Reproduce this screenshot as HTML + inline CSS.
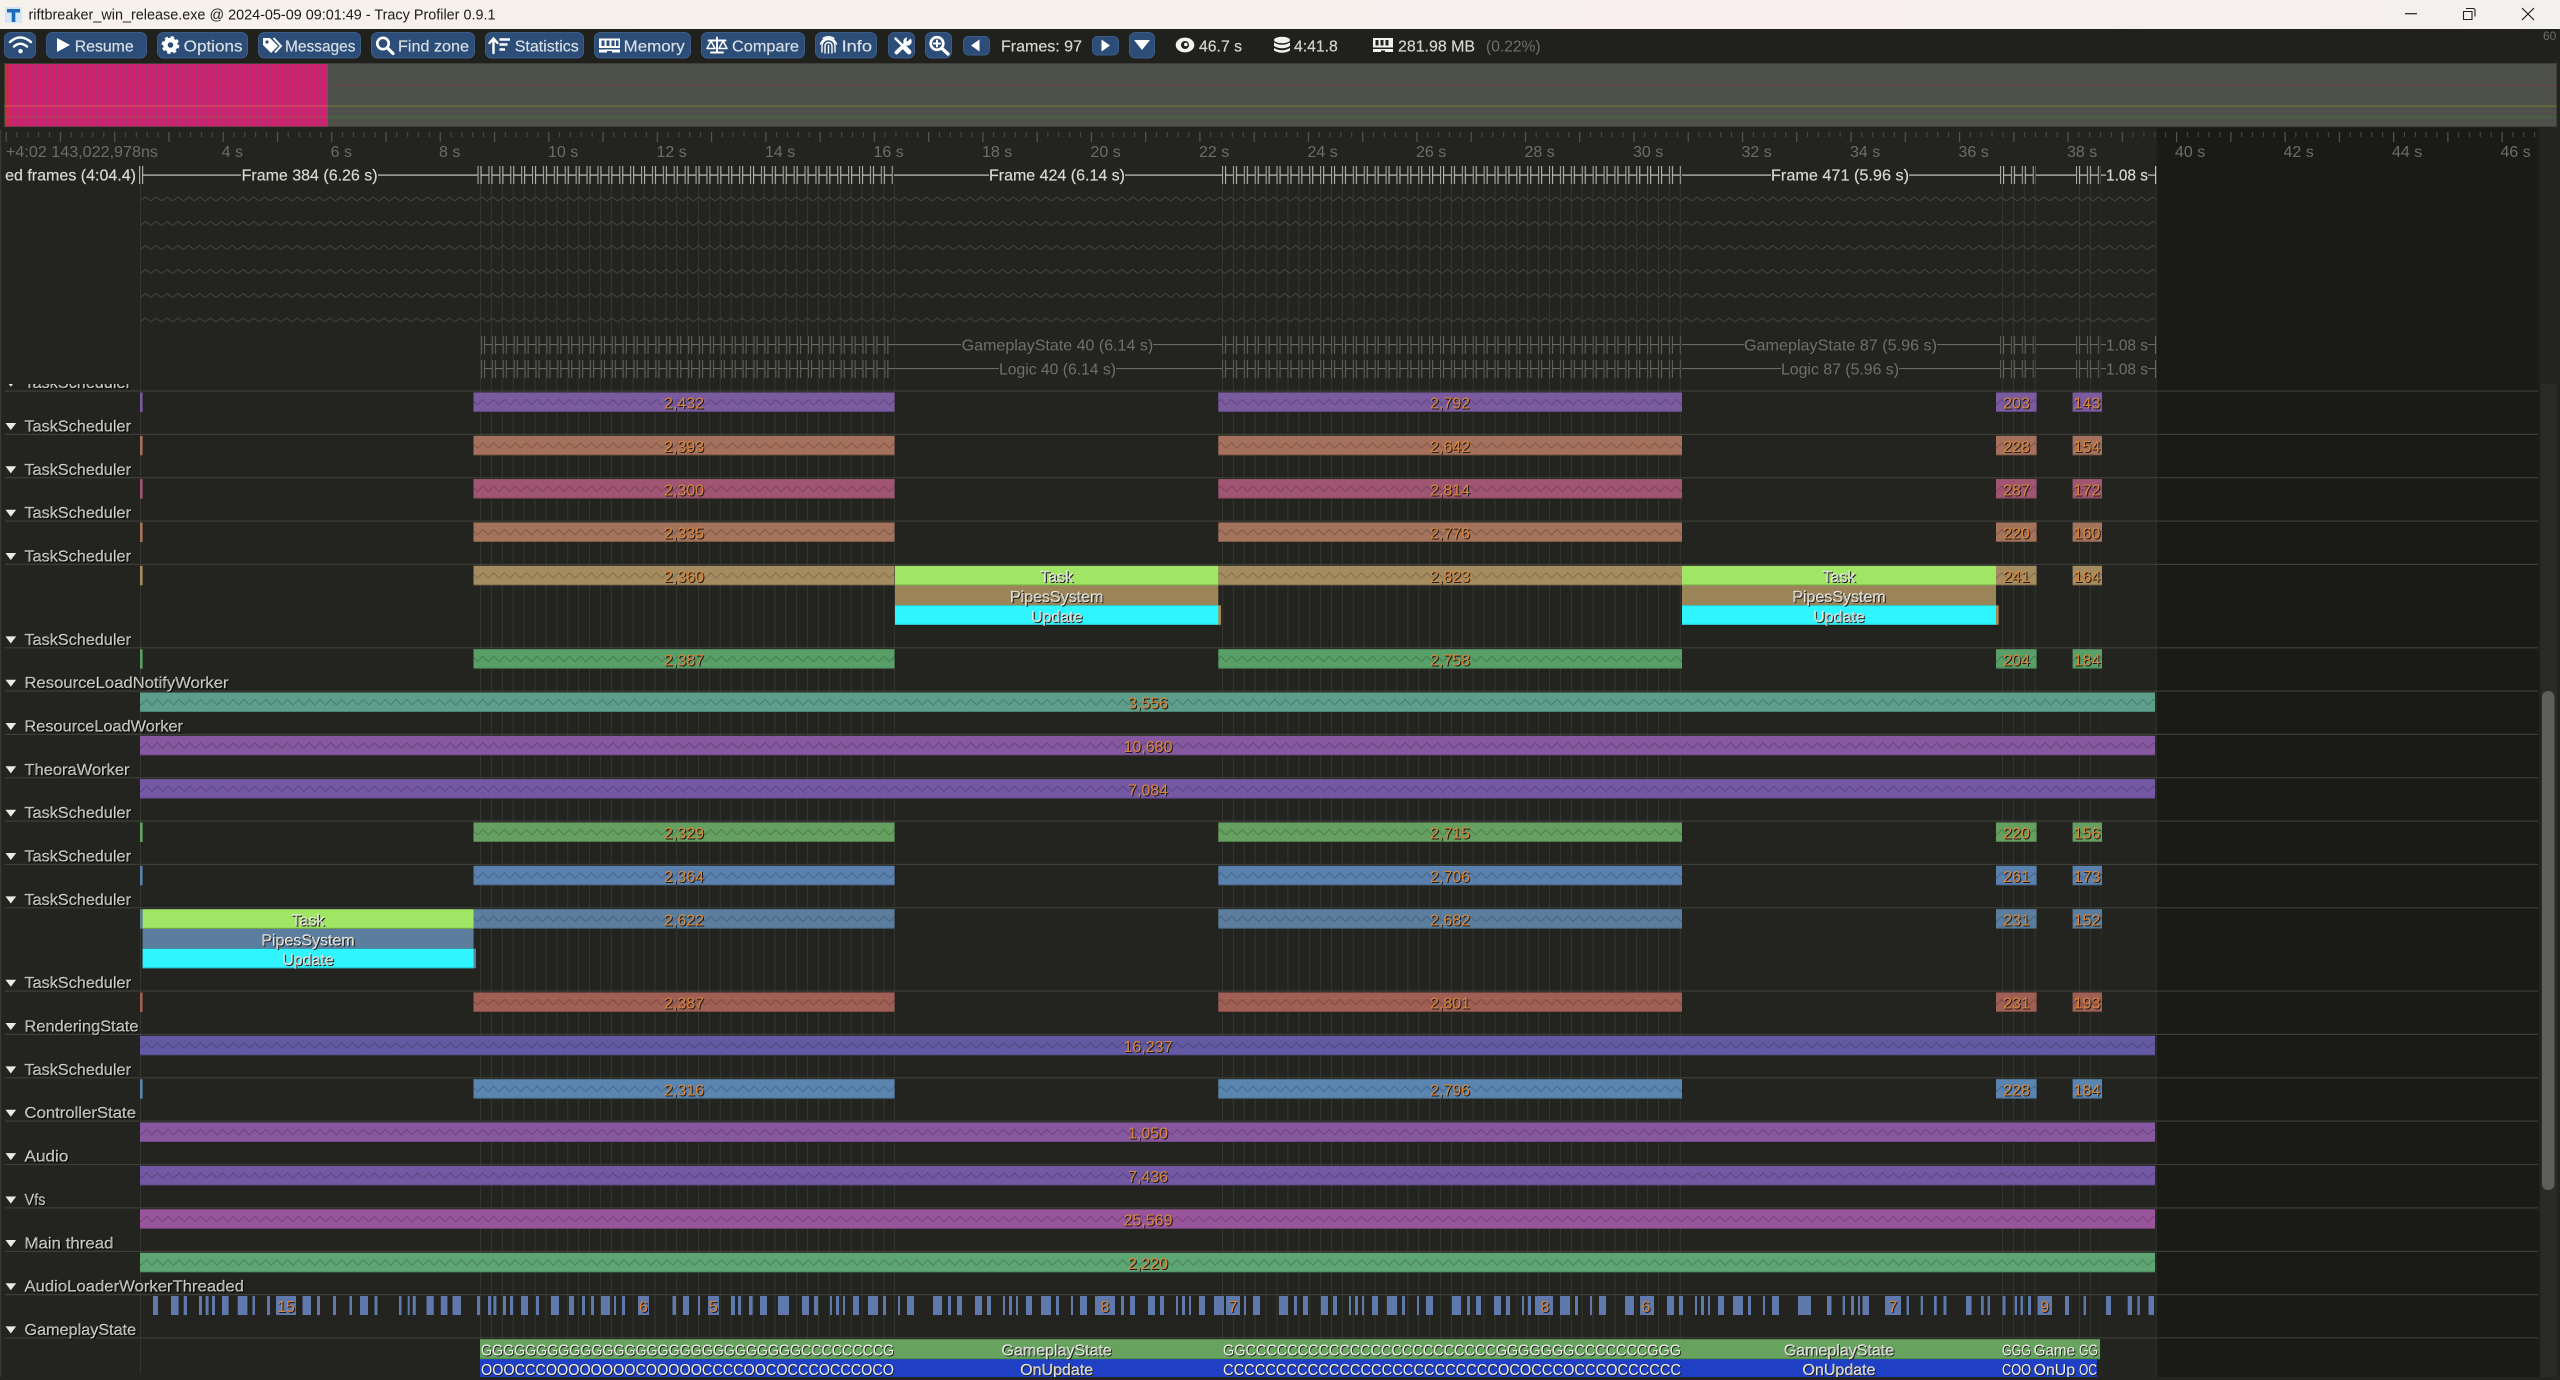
<!DOCTYPE html>
<html lang="en">
<head>
<meta charset="utf-8">
<title>Tracy Profiler</title>
<style>
html,body{margin:0;padding:0;background:#23241f;width:2560px;height:1380px;overflow:hidden}
svg{display:block;position:absolute;left:0;top:0}
text{font-family:"Liberation Sans",sans-serif;font-size:16px;white-space:pre}
.b{fill:#d8dfe4;stroke:#d8dfe4;stroke-width:.2px}
.w{fill:#d6d6ce;stroke:#d6d6ce;stroke-width:.2px}
.r{fill:#6c6d68}
.f{fill:#d8d8d0;stroke:#d8d8d0;stroke-width:.2px}
.g{fill:#6f706a}
.l{fill:#dcdcd4;stroke:#dcdcd4;stroke-width:.2px;text-shadow:1px 1px 0 #000}
.n{fill:#d9863a;text-anchor:middle;text-shadow:1px 1px 0 #1a1a1a}
.z{fill:#f2f2ec;stroke:#f2f2ec;stroke-width:.2px;text-anchor:middle;text-shadow:1px 1px 0 #222}
.c{fill:#f0f0ea;text-shadow:1px 1px 0 #222}
</style>
</head>
<body>
<svg width="2560" height="1380" viewBox="0 0 2560 1380" xmlns="http://www.w3.org/2000/svg">
<defs>
<linearGradient id="tb" x1="0" x2="1" y1="0" y2="0"><stop offset="0" stop-color="#f6f1ea"/><stop offset=".8" stop-color="#f8efef"/><stop offset="1" stop-color="#f3f1ee"/></linearGradient>
<pattern id="mg" patternUnits="userSpaceOnUse" width="3.34" height="10"><rect width="3.34" height="10" fill="#d4206a"/><rect x="2.5" width=".84" height="10" fill="#9c3a80"/></pattern>
<pattern id="tk" patternUnits="userSpaceOnUse" width="54.26" height="10"><rect width="1.2" height="10" fill="#555650"/><rect x="10.85" width="1" height="5" fill="#4c4d48"/><rect x="21.7" width="1" height="5" fill="#4c4d48"/><rect x="32.55" width="1" height="5" fill="#4c4d48"/><rect x="43.4" width="1" height="5" fill="#4c4d48"/></pattern>
<pattern id="wt" patternUnits="userSpaceOnUse" width="10.85" height="6"><path d="M0 5 L5.42 1 L10.85 5" fill="none" stroke="#43443e" stroke-width="1"/></pattern>
<pattern id="wb" patternUnits="userSpaceOnUse" width="10.85" height="21"><path d="M0 14 L5.42 8.5 L10.85 14" fill="none" stroke="#000" stroke-opacity=".2" stroke-width="1"/></pattern>
<pattern id="hw" patternUnits="userSpaceOnUse" width="10.9" height="18"><rect width="1.1" height="18" fill="#a8a8a0"/><rect x="3" width="1.1" height="18" fill="#b8b8b0"/><rect x="3" y="8.5" width="7.9" height="1.2" fill="#c8c8c0"/></pattern>
<pattern id="hg" patternUnits="userSpaceOnUse" width="10.9" height="18"><rect width="1.1" height="18" fill="#5a5b54"/><rect x="3" width="1.1" height="18" fill="#5f6059"/><rect x="3" y="8" width="7.9" height="1.1" fill="#6a6b64"/></pattern>
<pattern id="v" patternUnits="userSpaceOnUse" width="10.9" height="10"><rect width="1" height="10" fill="#34352f"/></pattern>
<pattern id="au" patternUnits="userSpaceOnUse" width="173" height="19.5"><path d="M0 0h5v19.5h-5zM18 0h7v19.5h-7zM30 0h4v19.5h-4zM46 0h2v19.5h-2zM52 0h3v19.5h-3zM59 0h2v19.5h-2zM69 0h6v19.5h-6zM84 0h10v19.5h-10zM99 0h3v19.5h-3zM114 0h2v19.5h-2zM123 0h7v19.5h-7zM149 0h9v19.5h-9zM164 0h3v19.5h-3z" fill="#5f79ad"/></pattern>
<clipPath id="tr"><rect x="0" y="384" width="2560" height="993"/></clipPath>
<g id="s"><rect x="5" y="-.5" width="2533" height="1.2" fill="#3d3e38"/><path d="M5.5 -11.3H16.2L10.8 -4.2z" fill="#eaeae2"/></g>
<g id="b4">
<rect x="140" y="1.5" width="2.6" height="19.5"/><rect x="473.5" y="1.5" width="421" height="19.5"/><rect x="1218.3" y="1.5" width="463.7" height="19.5"/><rect x="1996" y="1.5" width="40.6" height="19.5"/><rect x="2072.6" y="1.5" width="29.4" height="19.5"/>
<g fill="#000" fill-opacity=".2"><rect x="473.5" y="20" width="421" height="1"/><rect x="1218.3" y="20" width="463.7" height="1"/><rect x="1996" y="20" width="40.6" height="1"/><rect x="2072.6" y="20" width="29.4" height="1"/></g>
<g fill="url(#wb)"><rect x="473.5" y="1.5" width="421" height="19"/><rect x="1218.3" y="1.5" width="463.7" height="19"/><rect x="1996" y="1.5" width="42" height="19"/><rect x="2072.6" y="1.5" width="31" height="19"/></g>
</g>
<g id="bf"><rect x="140" y="1.5" width="2015" height="19.5"/><rect x="140" y="20" width="2015" height="1" fill="#000" fill-opacity=".15"/><rect x="140" y="1.5" width="2015" height="19" fill="url(#wb)"/></g>
</defs>

<rect width="2560" height="1380" fill="#23241f"/>
<!-- title bar -->
<rect width="2560" height="29" fill="url(#tb)"/>
<rect x="5" y="7" width="17" height="16" fill="#d3e6f8"/>
<path d="M7 9H20V12.5H15.3V22H11.7V12.5H7z" fill="#1c6cb8"/>
<text x="28.5" y="19.5" style="font-size:15px" fill="#1b1b1b" textLength="467" lengthAdjust="spacingAndGlyphs">riftbreaker_win_release.exe @ 2024-05-09 09:01:49 - Tracy Profiler 0.9.1</text>
<path d="M2405 13.7H2417" stroke="#222" stroke-width="1.2"/>
<path d="M2466 8.5H2473Q2475 8.5 2475 10.5V16.5M2463.5 11.5H2472V19.5H2463.5z" fill="none" stroke="#222" stroke-width="1.1"/>
<path d="M2522 8L2534 20M2534 8L2522 20" stroke="#222" stroke-width="1.2"/>

<!-- toolbar -->
<rect y="29" width="2560" height="34" fill="#20211c"/>
<g fill="#2b4d78" stroke="#3c5c86" stroke-width="1">
<rect x="4.5" y="32.5" width="31" height="25.5" rx="6"/>
<rect x="46.5" y="32.5" width="100" height="25.5" rx="6"/>
<rect x="157.5" y="32.5" width="90" height="25.5" rx="6"/>
<rect x="258.5" y="32.5" width="102" height="25.5" rx="6"/>
<rect x="371.5" y="32.5" width="103" height="25.5" rx="6"/>
<rect x="485.5" y="32.5" width="98" height="25.5" rx="6"/>
<rect x="594.5" y="32.5" width="96" height="25.5" rx="6"/>
<rect x="701.5" y="32.5" width="103" height="25.5" rx="6"/>
<rect x="815.5" y="32.5" width="61" height="25.5" rx="6"/>
<rect x="888.5" y="32.5" width="26" height="25.5" rx="6"/>
<rect x="925.5" y="32.5" width="26" height="25.5" rx="6"/>
<rect x="963.5" y="36.5" width="26" height="18.5" rx="5"/>
<rect x="1092.5" y="36.5" width="26" height="18.5" rx="5"/>
<rect x="1129.5" y="32.5" width="25" height="25.5" rx="6"/>
</g>
<g fill="none" stroke="#fff" stroke-linecap="round">
<path d="M10 42Q20 33 31 42M14 46.5Q20 41 27 46.5" stroke-width="2.5"/>
<circle cx="383" cy="43.5" r="5.7" stroke-width="2.7"/><path d="M387.5 48L393 53.5" stroke-width="3.2"/>
<path d="M493.5 53V39M489.5 43L493.5 38.5L497.5 43" stroke-width="2.4"/>
<path d="M499.5 39.5H510M499.5 44.5H507.5M499.5 49.5H505" stroke-width="2.6" stroke-linecap="butt"/>
<path d="M717 37.5V51.5M711 52.5H723M708.5 40.5H725.5" stroke-width="1.9"/>
<path d="M711 41L707 48.5H715zM723 41L719 48.5H727z" stroke-width="1.5" stroke-linejoin="round"/>
<path d="M822 52V46A6.5 6.5 0 0 1 835 46V52M825 53V46A3.5 3.5 0 0 1 832 46V53M828.5 53V45.5M820.5 44A8.5 8.5 0 0 1 836.5 44M823 38.5A9.5 9.5 0 0 1 834 38.5" stroke-width="1.4"/>
<path d="M895.5 38.5L903 46" stroke-width="2.4"/>
<path d="M903 46L909 52" stroke-width="4.8"/>
<path d="M907 42.5L896.5 52.5" stroke-width="3.8"/>
<circle cx="937" cy="43.5" r="6.3" stroke-width="2.7"/><path d="M942 48.5L948 54" stroke-width="3.3"/>
<path d="M934 43.5H940M937 40.5V46.5" stroke-width="2"/>
</g>
<circle cx="907.5" cy="41.500" r="4.200" fill="#fff"/><path d="M907.500 41.500L912.500 36.500H907L906.500 41z" fill="#2b4d78"/>
<circle cx="20.5" cy="51.2" r="2.2" fill="#fff"/>
<path d="M57 38L70 45L57 52z" fill="#fff"/>
<circle cx="170.5" cy="45" r="5" fill="none" stroke="#fff" stroke-width="4.4"/>
<circle cx="170.5" cy="45" r="7.6" fill="none" stroke="#fff" stroke-width="2.6" stroke-dasharray="3.2 2.77"/>
<path d="M263 38H270L278 46L271 53L263 45z" fill="#fff"/><circle cx="267" cy="42" r="1.6" fill="#2b4d78"/>
<path d="M273.5 38L281 46L275 52.5" fill="none" stroke="#fff" stroke-width="2"/>
<rect x="599" y="38.5" width="21" height="9.5" fill="#fff"/>
<path d="M601.5 40.5h3v5.5h-3zM606.5 40.5h3v5.5h-3zM611.5 40.5h3v5.5h-3zM616 40.5h2.5v5.5h-2.5z" fill="#2b4d78"/>
<path d="M599 49.5h21v3h-8v-1.5h-5v1.5h-8z" fill="#fff"/>
<path d="M971 45.5L979.5 39.5V51.5z" fill="#fff"/>
<path d="M1110 45.5L1101.5 39.5V51.5z" fill="#fff"/>
<path d="M1134 40H1150L1142 50z" fill="#fff"/>
<text x="74.7" y="51.5" class="b" textLength="59" lengthAdjust="spacingAndGlyphs">Resume</text>
<text x="183.7" y="51.5" class="b" textLength="58.8" lengthAdjust="spacingAndGlyphs">Options</text>
<text x="285" y="51.5" class="b" textLength="70.5" lengthAdjust="spacingAndGlyphs">Messages</text>
<text x="398" y="51.5" class="b" textLength="71" lengthAdjust="spacingAndGlyphs">Find zone</text>
<text x="514.7" y="51.5" class="b" textLength="64.100" lengthAdjust="spacingAndGlyphs">Statistics</text>
<text x="623.7" y="51.5" class="b" textLength="61" lengthAdjust="spacingAndGlyphs">Memory</text>
<text x="732" y="51.5" class="b" textLength="67" lengthAdjust="spacingAndGlyphs">Compare</text>
<text x="841.6" y="51.5" class="b" textLength="30.4" lengthAdjust="spacingAndGlyphs">Info</text>
<text x="1001" y="51.5" class="w" textLength="81" lengthAdjust="spacingAndGlyphs">Frames: 97</text>
<ellipse cx="1185" cy="45" rx="9.3" ry="7.4" fill="#f2f2ee"/><circle cx="1185" cy="45" r="4" fill="#20211c"/><circle cx="1185.8" cy="44.5" r="1.8" fill="#f2f2ee"/>
<text x="1199" y="51.5" class="w" textLength="43" lengthAdjust="spacingAndGlyphs">46.7 s</text>
<g fill="#f2f2ee"><ellipse cx="1282" cy="40" rx="8" ry="3.200"/><path d="M1274 42.500Q1282 47 1290 42.500V46Q1282 50.500 1274 46z"/><path d="M1274 48Q1282 52.500 1290 48V50.500Q1282 55 1274 50.500z"/></g>
<text x="1294" y="51.5" class="w" textLength="43.700" lengthAdjust="spacingAndGlyphs">4:41.8</text>
<rect x="1373" y="38" width="20" height="9.5" fill="#f2f2ee"/>
<path d="M1375.5 40h3v5.5h-3zM1380.5 40h3v5.5h-3zM1385.5 40h3v5.5h-3z" fill="#20211c"/>
<path d="M1373 49h20v3h-8v-1.5h-4v1.5h-8z" fill="#f2f2ee"/>
<text x="1398" y="51.5" class="w" textLength="77" lengthAdjust="spacingAndGlyphs">281.98 MB</text>
<text x="1486" y="51.5" fill="#6f706b" textLength="54.6" lengthAdjust="spacingAndGlyphs">(0.22%)</text>
<text x="2543" y="40" style="font-size:12px" fill="#6c6d66">60</text>

<!-- frame graph -->
<rect x="4.500" y="63.500" width="2552" height="63" fill="#4e5149" stroke="#3f403b" stroke-width="1"/>
<rect x="5" y="64" width="323" height="62.500" fill="url(#mg)"/>
<rect x="5" y="64" width="3.500" height="62.500" fill="#c62f3a"/>
<rect x="4" y="85" width="2553" height="1" fill="#f00" fill-opacity=".14"/>
<rect x="4" y="105.5" width="2553" height="1.2" fill="#ff0" fill-opacity=".2"/>
<rect x="4" y="116.5" width="2553" height="1.2" fill="#0f0" fill-opacity=".13"/>

<!-- main area backgrounds -->
<rect x="2157" y="128" width="382" height="1249" fill="#1a1b17"/>
<rect x="0" y="128" width="2157" height="1249" fill="#23241f"/>
<rect x="2155.5" y="184" width="1.5" height="1193" fill="#2b2c27"/>
<rect x="0" y="130" width="1.2" height="1247" fill="#393a35"/>
<rect x="140" y="183" width="1" height="1190" fill="#353630"/>

<!-- vertical frame lines -->
<g transform="translate(480,183)"><rect width="415" height="1194" fill="url(#v)"/></g>
<g transform="translate(1222,183)"><rect width="460" height="1194" fill="url(#v)"/></g>
<g transform="translate(2002,183)"><rect width="36" height="1194" fill="url(#v)"/></g>
<g transform="translate(2079,183)"><rect width="22" height="1194" fill="url(#v)"/></g>

<!-- ruler -->
<rect transform="translate(5.6,132)" width="2548" height="10" fill="url(#tk)"/>
<g>
<text x="6" y="157" class="r" textLength="152" lengthAdjust="spacingAndGlyphs">+4:02 143,022,978ns</text>
<text x="221.6" y="157" class="r">4 s</text><text x="330.6" y="157" class="r">6 s</text><text x="439" y="157" class="r">8 s</text>
<text x="548" y="157" class="r">10 s</text><text x="656.5" y="157" class="r">12 s</text><text x="765" y="157" class="r">14 s</text>
<text x="873.5" y="157" class="r">16 s</text><text x="982" y="157" class="r">18 s</text><text x="1090.5" y="157" class="r">20 s</text>
<text x="1199" y="157" class="r">22 s</text><text x="1307.5" y="157" class="r">24 s</text><text x="1416" y="157" class="r">26 s</text>
<text x="1524.5" y="157" class="r">28 s</text><text x="1633" y="157" class="r">30 s</text><text x="1741.5" y="157" class="r">32 s</text>
<text x="1850" y="157" class="r">34 s</text><text x="1958.5" y="157" class="r">36 s</text><text x="2067" y="157" class="r">38 s</text>
<text x="2175" y="157" class="r">40 s</text><text x="2283.5" y="157" class="r">42 s</text><text x="2392" y="157" class="r">44 s</text><text x="2500.5" y="157" class="r">46 s</text>
</g>

<!-- frames row -->
<svg x="5" y="160" width="134" height="30" overflow="hidden"><text x="-40" y="20.5" class="f" textLength="171" lengthAdjust="spacingAndGlyphs">Skipped frames (4:04.4)</text></svg>
<g fill="#b0b0a8"><rect x="139" y="166" width="1.2" height="18"/><rect x="142" y="166" width="1.2" height="18"/></g>
<g fill="#c8c8c0"><rect x="143" y="174.5" width="98" height="1.2"/><rect x="378" y="174.5" width="100" height="1.2"/><rect x="894" y="174.5" width="95" height="1.2"/><rect x="1125" y="174.5" width="97" height="1.2"/><rect x="1682" y="174.5" width="89" height="1.2"/><rect x="1909" y="174.5" width="91" height="1.2"/><rect x="2036" y="174.5" width="40" height="1.2"/><rect x="2101" y="174.5" width="5" height="1.2"/><rect x="2148" y="174.5" width="7" height="1.2"/><rect x="2155" y="166" width="1.2" height="18"/></g>
<rect transform="translate(477.5,166)" width="417" height="18" fill="url(#hw)"/>
<rect transform="translate(1222,166)" width="460" height="18" fill="url(#hw)"/>
<rect transform="translate(2000,166)" width="36" height="18" fill="url(#hw)"/>
<rect transform="translate(2076,166)" width="25" height="18" fill="url(#hw)"/>
<text x="241.6" y="180.5" class="f" textLength="136" lengthAdjust="spacingAndGlyphs">Frame 384 (6.26 s)</text>
<text x="989" y="180.5" class="f" textLength="136" lengthAdjust="spacingAndGlyphs">Frame 424 (6.14 s)</text>
<text x="1771" y="180.5" class="f" textLength="138" lengthAdjust="spacingAndGlyphs">Frame 471 (5.96 s)</text>
<text x="2106" y="180.5" class="f" textLength="42" lengthAdjust="spacingAndGlyphs">1.08 s</text>

<!-- wave rows -->
<rect transform="translate(140,196)" width="2015" height="6" fill="url(#wt)"/>
<rect transform="translate(140,220.5)" width="2015" height="6" fill="url(#wt)"/>
<rect transform="translate(140,244.5)" width="2015" height="6" fill="url(#wt)"/>
<rect transform="translate(140,268.5)" width="2015" height="6" fill="url(#wt)"/>
<rect transform="translate(140,292.5)" width="2015" height="6" fill="url(#wt)"/>
<rect transform="translate(140,317)" width="2015" height="6" fill="url(#wt)"/>

<!-- gameplay / logic rows -->
<rect transform="translate(481,336)" width="414" height="18" fill="url(#hg)"/>
<rect transform="translate(1222,336)" width="460" height="18" fill="url(#hg)"/>
<rect transform="translate(2000,336)" width="36" height="18" fill="url(#hg)"/>
<rect transform="translate(2076,336)" width="25" height="18" fill="url(#hg)"/>
<rect transform="translate(481,360)" width="414" height="18" fill="url(#hg)"/>
<rect transform="translate(1222,360)" width="460" height="18" fill="url(#hg)"/>
<rect transform="translate(2000,360)" width="36" height="18" fill="url(#hg)"/>
<rect transform="translate(2076,360)" width="25" height="18" fill="url(#hg)"/>
<g fill="#6a6b64">
<rect x="895" y="344" width="66" height="1.1"/><rect x="1153" y="344" width="69" height="1.1"/><rect x="1682" y="344" width="62" height="1.1"/><rect x="1937" y="344" width="63" height="1.1"/><rect x="2036" y="344" width="40" height="1.1"/><rect x="2101" y="344" width="5" height="1.1"/><rect x="2148" y="344" width="7" height="1.1"/><rect x="2155" y="336" width="1.1" height="18"/>
<rect x="895" y="368" width="104" height="1.1"/><rect x="1116" y="368" width="106" height="1.1"/><rect x="1682" y="368" width="99" height="1.1"/><rect x="1899" y="368" width="101" height="1.1"/><rect x="2036" y="368" width="40" height="1.1"/><rect x="2101" y="368" width="5" height="1.1"/><rect x="2148" y="368" width="7" height="1.1"/><rect x="2155" y="360" width="1.1" height="18"/>
</g>
<text x="961.7" y="350.5" class="g" textLength="191.5" lengthAdjust="spacingAndGlyphs">GameplayState 40 (6.14 s)</text>
<text x="999" y="374.5" class="g" textLength="117" lengthAdjust="spacingAndGlyphs">Logic 40 (6.14 s)</text>
<text x="1744" y="350.5" class="g" textLength="193" lengthAdjust="spacingAndGlyphs">GameplayState 87 (5.96 s)</text>
<text x="1781" y="374.5" class="g" textLength="118" lengthAdjust="spacingAndGlyphs">Logic 87 (5.96 s)</text>
<text x="2106" y="350.5" class="g" textLength="42" lengthAdjust="spacingAndGlyphs">1.08 s</text>
<text x="2106" y="374.5" class="g" textLength="42" lengthAdjust="spacingAndGlyphs">1.08 s</text>

<!-- tracks -->
<g clip-path="url(#tr)">
<g transform="translate(0,391)" fill="#7a5ba0"><use href="#s"/><text x="24.5" y="-2.8" class="l" textLength="106.5" lengthAdjust="spacingAndGlyphs">TaskScheduler</text><use href="#b4"/><text x="684" y="17.7" class="n">2,432</text><text x="1450" y="17.7" class="n">2,792</text><text x="2016.5" y="17.7" class="n">203</text><text x="2087" y="17.7" class="n">143</text></g>
<g transform="translate(0,434.3)" fill="#a5705c"><use href="#s"/><text x="24.5" y="-2.8" class="l" textLength="106.5" lengthAdjust="spacingAndGlyphs">TaskScheduler</text><use href="#b4"/><text x="684" y="17.7" class="n">2,393</text><text x="1450" y="17.7" class="n">2,642</text><text x="2016.5" y="17.7" class="n">228</text><text x="2087" y="17.7" class="n">154</text></g>
<g transform="translate(0,477.6)" fill="#a05672"><use href="#s"/><text x="24.5" y="-2.8" class="l" textLength="106.5" lengthAdjust="spacingAndGlyphs">TaskScheduler</text><use href="#b4"/><text x="684" y="17.7" class="n">2,300</text><text x="1450" y="17.7" class="n">2,814</text><text x="2016.5" y="17.7" class="n">287</text><text x="2087" y="17.7" class="n">172</text></g>
<g transform="translate(0,521)" fill="#a3735c"><use href="#s"/><text x="24.5" y="-2.8" class="l" textLength="106.5" lengthAdjust="spacingAndGlyphs">TaskScheduler</text><use href="#b4"/><text x="684" y="17.7" class="n">2,335</text><text x="1450" y="17.7" class="n">2,776</text><text x="2016.5" y="17.7" class="n">220</text><text x="2087" y="17.7" class="n">160</text></g>
<g transform="translate(0,564.3)" fill="#a58c60"><use href="#s"/><text x="24.5" y="-2.8" class="l" textLength="106.5" lengthAdjust="spacingAndGlyphs">TaskScheduler</text><use href="#b4"/><text x="684" y="17.7" class="n">2,360</text><text x="1450" y="17.7" class="n">2,823</text><text x="2016.5" y="17.7" class="n">241</text><text x="2087" y="17.7" class="n">164</text>
<rect x="895" y="1.5" width="323.3" height="19.5" fill="#a0e664"/><rect x="895" y="20" width="323.3" height="1" fill="#7fbf50"/>
<rect x="895" y="21.2" width="323.3" height="19.5" fill="#9b8458"/>
<rect x="895" y="41" width="326" height="19.5" fill="#a58a52"/><rect x="895" y="41" width="323.3" height="19.5" fill="#2ef5ff"/><rect x="895" y="59.5" width="323.3" height="1" fill="#27c8d2"/>
<rect x="1682" y="1.5" width="314" height="19.5" fill="#a0e664"/><rect x="1682" y="20" width="314" height="1" fill="#7fbf50"/>
<rect x="1682" y="21.2" width="314" height="19.5" fill="#9b8458"/>
<rect x="1682" y="41" width="316.7" height="19.5" fill="#a58a52"/><rect x="1682" y="41" width="314" height="19.5" fill="#2ef5ff"/><rect x="1682" y="59.5" width="314" height="1" fill="#27c8d2"/>
<text x="1056.7" y="17.7" class="z">Task</text><text x="1056.7" y="37.7" class="z">PipesSystem</text><text x="1056.7" y="57.5" class="z">Update</text>
<text x="1839" y="17.7" class="z">Task</text><text x="1839" y="37.7" class="z">PipesSystem</text><text x="1839" y="57.5" class="z">Update</text></g>
<g transform="translate(0,647.7)" fill="#599f68"><use href="#s"/><text x="24.5" y="-2.8" class="l" textLength="106.5" lengthAdjust="spacingAndGlyphs">TaskScheduler</text><use href="#b4"/><text x="684" y="17.7" class="n">2,387</text><text x="1450" y="17.7" class="n">2,758</text><text x="2016.5" y="17.7" class="n">204</text><text x="2087" y="17.7" class="n">184</text></g>
<g transform="translate(0,691)" fill="#5c9e8a"><use href="#s"/><text x="24.5" y="-2.8" class="l" textLength="204" lengthAdjust="spacingAndGlyphs">ResourceLoadNotifyWorker</text><use href="#bf"/><text x="1148" y="17.7" class="n">3,556</text></g>
<g transform="translate(0,734.3)" fill="#85589f"><use href="#s"/><text x="24.5" y="-2.8" class="l" textLength="158.5" lengthAdjust="spacingAndGlyphs">ResourceLoadWorker</text><use href="#bf"/><text x="1148" y="17.7" class="n">10,680</text></g>
<g transform="translate(0,777.6)" fill="#7558a3"><use href="#s"/><text x="24.5" y="-2.8" class="l" textLength="105" lengthAdjust="spacingAndGlyphs">TheoraWorker</text><use href="#bf"/><text x="1148" y="17.7" class="n">7,084</text></g>
<g transform="translate(0,821)" fill="#66a060"><use href="#s"/><text x="24.5" y="-2.8" class="l" textLength="106.5" lengthAdjust="spacingAndGlyphs">TaskScheduler</text><use href="#b4"/><text x="684" y="17.7" class="n">2,329</text><text x="1450" y="17.7" class="n">2,715</text><text x="2016.5" y="17.7" class="n">220</text><text x="2087" y="17.7" class="n">156</text></g>
<g transform="translate(0,864.3)" fill="#5a80ae"><use href="#s"/><text x="24.5" y="-2.8" class="l" textLength="106.5" lengthAdjust="spacingAndGlyphs">TaskScheduler</text><use href="#b4"/><text x="684" y="17.7" class="n">2,364</text><text x="1450" y="17.7" class="n">2,706</text><text x="2016.5" y="17.7" class="n">261</text><text x="2087" y="17.7" class="n">173</text></g>
<g transform="translate(0,907.7)" fill="#5b7e9f"><use href="#s"/><text x="24.5" y="-2.8" class="l" textLength="106.5" lengthAdjust="spacingAndGlyphs">TaskScheduler</text><use href="#b4"/><text x="684" y="17.7" class="n">2,622</text><text x="1450" y="17.7" class="n">2,682</text><text x="2016.5" y="17.7" class="n">231</text><text x="2087" y="17.7" class="n">152</text>
<rect x="142.6" y="1.5" width="331" height="19.5" fill="#a0e664"/><rect x="142.6" y="20" width="331" height="1" fill="#7fbf50"/>
<rect x="142.6" y="21.2" width="331" height="19.5" fill="#5b7e9f"/>
<rect x="142.6" y="41" width="333.4" height="19.5" fill="#5b7e9f"/><rect x="142.6" y="41" width="331" height="19.5" fill="#2ef5ff"/><rect x="142.6" y="59.5" width="331" height="1" fill="#27c8d2"/>
<text x="308" y="17.7" class="z">Task</text><text x="308" y="37.7" class="z">PipesSystem</text><text x="308" y="57.5" class="z">Update</text></g>
<g transform="translate(0,991)" fill="#a05f55"><use href="#s"/><text x="24.5" y="-2.8" class="l" textLength="106.5" lengthAdjust="spacingAndGlyphs">TaskScheduler</text><use href="#b4"/><text x="684" y="17.7" class="n">2,387</text><text x="1450" y="17.7" class="n">2,801</text><text x="2016.5" y="17.7" class="n">231</text><text x="2087" y="17.7" class="n">193</text></g>
<g transform="translate(0,1034.3)" fill="#635aa3"><use href="#s"/><text x="24.5" y="-2.8" class="l" textLength="114" lengthAdjust="spacingAndGlyphs">RenderingState</text><use href="#bf"/><text x="1148" y="17.7" class="n">16,237</text></g>
<g transform="translate(0,1077.7)" fill="#5a85b0"><use href="#s"/><text x="24.5" y="-2.8" class="l" textLength="106.5" lengthAdjust="spacingAndGlyphs">TaskScheduler</text><use href="#b4"/><text x="684" y="17.7" class="n">2,316</text><text x="1450" y="17.7" class="n">2,796</text><text x="2016.5" y="17.7" class="n">228</text><text x="2087" y="17.7" class="n">184</text></g>
<g transform="translate(0,1121)" fill="#87589f"><use href="#s"/><text x="24.5" y="-2.8" class="l" textLength="111.5" lengthAdjust="spacingAndGlyphs">ControllerState</text><use href="#bf"/><text x="1148" y="17.7" class="n">1,050</text></g>
<g transform="translate(0,1164.4)" fill="#7358a3"><use href="#s"/><text x="24.5" y="-2.8" class="l" textLength="44" lengthAdjust="spacingAndGlyphs">Audio</text><use href="#bf"/><text x="1148" y="17.7" class="n">7,436</text></g>
<g transform="translate(0,1207.8)" fill="#98559b"><use href="#s"/><text x="24.5" y="-2.8" class="l" textLength="21" lengthAdjust="spacingAndGlyphs">Vfs</text><use href="#bf"/><text x="1148" y="17.7" class="n">25,569</text></g>
<g transform="translate(0,1251.3)" fill="#5ea574"><use href="#s"/><text x="24.5" y="-2.8" class="l" textLength="89" lengthAdjust="spacingAndGlyphs">Main thread</text><use href="#bf"/><text x="1148" y="17.7" class="n">2,220</text></g>
<g transform="translate(0,1294.5)"><use href="#s"/><text x="24.5" y="-2.8" class="l" textLength="219.5" lengthAdjust="spacingAndGlyphs">AudioLoaderWorkerThreaded</text>
<path fill="#5f79ad" d="M153 1.5h5v19h-5zM171 1.5h7.600v19h-7.600zM183.700 1.500h3.300v19h-3.300zM199 1.500h3v19h-3zM205.600 1.500h3v19h-3zM212 1.500h3v19h-3zM222 1.500h6.600v19h-6.600zM237.700 1.500h9.700v19h-9.700zM252.500 1.500h2.500v19h-2.500zM267 1.500h3v19h-3zM276 1.500h20v19h-20zM302.500 1.500h8.500v19h-8.500zM317 1.500h3v19h-3zM333 1.500h3v19h-3zM349.500 1.500h2.500v19h-2.500zM360 1.500h8v19h-8zM374.500 1.500h3v19h-3zM399 1.500h2.500v19h-2.500zM407.700 1.500h2v19h-2zM412.700 1.500h3.100v19h-3.100zM426.500 1.500h7.200v19h-7.200zM440.800 1.500h6.600v19h-6.600zM452.500 1.500h8.500v19h-8.500zM477 1.500h3v19h-3zM488 1.500h3v19h-3zM493.400 1.500h3v19h-3zM503 1.500h3v19h-3zM510 1.500h3v19h-3zM521 1.500h7v19h-7zM536 1.500h3v19h-3zM551 1.500h8v19h-8zM569 1.500h5v19h-5zM582 1.500h3v19h-3zM591 1.500h3v19h-3zM601 1.500h9v19h-9zM614 1.500h2v19h-2zM622 1.500h3v19h-3zM638 1.500h11v19h-11zM672.500 1.500h3.500v19h-3.500zM683 1.500h6v19h-6zM698 1.500h2v19h-2zM708 1.500h11v19h-11zM731 1.500h4v19h-4zM738 1.500h3v19h-3zM749 1.500h3.600v19h-3.600zM760 1.500h7v19h-7zM778 1.500h6v19h-6zM1800 1.500h11v19h-11zM1827 1.500h4.500v19h-4.500zM1842.700 1.500h2.300v19h-2.300zM1851 1.500h3v19h-3zM1858 1.500h2v19h-2zM1862.500 1.500h6.500v19h-6.500zM1885 1.500h16v19h-16zM1906.600 1.500h2.400v19h-2.400zM1920.700 1.500h2.300v19h-2.300zM1934 1.500h2.700v19h-2.700zM1943.500 1.500h2.900v19h-2.900zM1966 1.500h5.600v19h-5.600zM1981 1.500h2.700v19h-2.700zM1987.600 1.500h2.400v19h-2.400zM2002.600 1.500h2.900v19h-2.900zM2014.700 1.500h2.300v19h-2.300zM2020.500 1.500h2.500v19h-2.500zM2028 1.500h3v19h-3zM2037.500 1.500h14.500v19h-14.500zM2065 1.500h4v19h-4zM2083.600 1.500h2.400v19h-2.400zM2106 1.500h5v19h-5zM2127.700 1.500h4.300v19h-4.300zM2137.400 1.500h2.400v19h-2.400zM2148.500 1.500h5.500v19h-5.500z"/>
<rect transform="translate(784,1.5)" width="1016" height="19" fill="url(#au)"/>
<path fill="#5f79ad" d="M1095 1.500h20v19h-20zM1226 1.500h14v19h-14zM1537 1.500h16v19h-16zM1640 1.500h12v19h-12z"/>
<text x="286" y="17.7" class="n">15</text><text x="643.500" y="17.7" class="n">6</text><text x="713.500" y="17.7" class="n">5</text><text x="1105" y="17.7" class="n">8</text><text x="1233" y="17.7" class="n">7</text><text x="1545" y="17.7" class="n">8</text><text x="1646" y="17.7" class="n">6</text><text x="1893" y="17.7" class="n">7</text><text x="2044.700" y="17.7" class="n">9</text></g>
<g transform="translate(0,1337.7)"><use href="#s"/><text x="24.5" y="-2.8" class="l" textLength="111.7" lengthAdjust="spacingAndGlyphs">GameplayState</text>
<rect x="480" y="1.500" width="1620" height="19.700" fill="#67a35f"/>
<rect x="480" y="20.500" width="1620" height="1.200" fill="#4f8a4b"/>
<rect x="480" y="21.500" width="1617" height="19.500" fill="#1f3fc4"/>
<text x="481" y="17.700" class="c" textLength="413" lengthAdjust="spacingAndGlyphs">GGGGGGGGGGGGGGGGGGGGGGGGGGGGGCCCCCCCCG</text>
<text x="1056.700" y="17.700" class="z">GameplayState</text>
<text x="1223" y="17.700" class="c" textLength="458" lengthAdjust="spacingAndGlyphs">GGCCCCCCCCCCCCCCCCCCCCCCCCGGGGGGGCCCCCCCGGG</text>
<text x="1839" y="17.700" class="z">GameplayState</text>
<text x="2002" y="17.700" class="c" textLength="29" lengthAdjust="spacingAndGlyphs">GGG</text>
<text x="2033.600" y="17.700" class="c" textLength="41.500" lengthAdjust="spacingAndGlyphs">Game</text>
<text x="2079" y="17.700" class="c" textLength="19" lengthAdjust="spacingAndGlyphs">GG</text>
<text x="481" y="37.500" class="c" textLength="413" lengthAdjust="spacingAndGlyphs">OOOCCCOOOOOOOOCOOOOOCCCCOOCOCCCOCCCOCO</text>
<text x="1056.700" y="37.500" class="z">OnUpdate</text>
<text x="1223" y="37.500" class="c" textLength="458" lengthAdjust="spacingAndGlyphs">CCCCCCCCCCCCCCCCCCCCCCCCCCOCOCCCOCCCOCCCCCC</text>
<text x="1839" y="37.500" class="z">OnUpdate</text>
<text x="2002" y="37.500" class="c" textLength="29" lengthAdjust="spacingAndGlyphs">COO</text>
<text x="2033.600" y="37.500" class="c" textLength="41.500" lengthAdjust="spacingAndGlyphs">OnUp</text>
<text x="2079" y="37.500" class="c" textLength="18" lengthAdjust="spacingAndGlyphs">OC</text></g>
</g>

<!-- scrollbar -->
<rect x="2539" y="128" width="21" height="1252" fill="#23241f"/>
<rect x="2541" y="384" width="16" height="993" fill="#2a2b26"/>
<rect x="2542" y="691" width="12.500" height="499" rx="6" fill="#5e5f5b"/>
<rect x="0" y="1377" width="2560" height="3" fill="#23241f"/>
</svg>
</body>
</html>
